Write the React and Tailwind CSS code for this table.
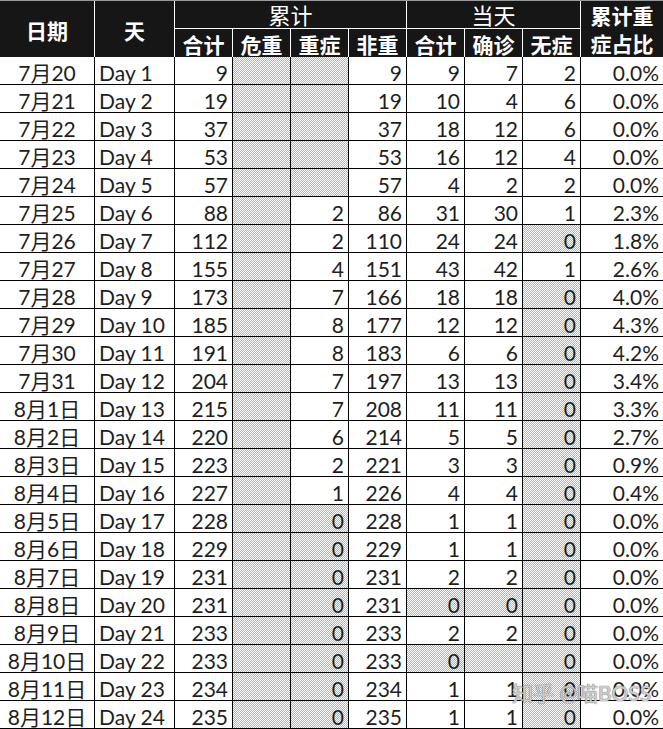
import React from "react";

const rows = [
  ["7月20", "Day 1", 9, null, null, 9, 9, 7, 2, "0.0%"],
  ["7月21", "Day 2", 19, null, null, 19, 10, 4, 6, "0.0%"],
  ["7月22", "Day 3", 37, null, null, 37, 18, 12, 6, "0.0%"],
  ["7月23", "Day 4", 53, null, null, 53, 16, 12, 4, "0.0%"],
  ["7月24", "Day 5", 57, null, null, 57, 4, 2, 2, "0.0%"],
  ["7月25", "Day 6", 88, null, 2, 86, 31, 30, 1, "2.3%"],
  ["7月26", "Day 7", 112, null, 2, 110, 24, 24, 0, "1.8%"],
  ["7月27", "Day 8", 155, null, 4, 151, 43, 42, 1, "2.6%"],
  ["7月28", "Day 9", 173, null, 7, 166, 18, 18, 0, "4.0%"],
  ["7月29", "Day 10", 185, null, 8, 177, 12, 12, 0, "4.3%"],
  ["7月30", "Day 11", 191, null, 8, 183, 6, 6, 0, "4.2%"],
  ["7月31", "Day 12", 204, null, 7, 197, 13, 13, 0, "3.4%"],
  ["8月1日", "Day 13", 215, null, 7, 208, 11, 11, 0, "3.3%"],
  ["8月2日", "Day 14", 220, null, 6, 214, 5, 5, 0, "2.7%"],
  ["8月3日", "Day 15", 223, null, 2, 221, 3, 3, 0, "0.9%"],
  ["8月4日", "Day 16", 227, null, 1, 226, 4, 4, 0, "0.4%"],
  ["8月5日", "Day 17", 228, null, 0, 228, 1, 1, 0, "0.0%"],
  ["8月6日", "Day 18", 229, null, 0, 229, 1, 1, 0, "0.0%"],
  ["8月7日", "Day 19", 231, null, 0, 231, 2, 2, 0, "0.0%"],
  ["8月8日", "Day 20", 231, null, 0, 231, 0, 0, 0, "0.0%"],
  ["8月9日", "Day 21", 233, null, 0, 233, 2, 2, 0, "0.0%"],
  ["8月10日", "Day 22", 233, null, 0, 233, 0, null, 0, "0.0%"],
  ["8月11日", "Day 23", 234, null, 0, 234, 1, 1, 0, "0.0%"],
  ["8月12日", "Day 24", 235, null, 0, 235, 1, 1, 0, "0.0%"],
];

const cols = "grid grid-cols-[95px_80px_58px_58px_58px_58px_58px_58px_58px_82px]";
const pattern =
  "bg-[repeating-conic-gradient(#b4b4b4_0_25%,#ffffff_0_50%)] bg-[length:2px_2px]";

function HeadCell({ children, className = "" }) {
  return (
    <div
      className={
        "flex items-center justify-center border-r border-white text-white font-bold text-[21px] leading-none " +
        className
      }
    >
      {children}
    </div>
  );
}

export default function App() {
  return (
    <div
      className="relative w-[663px] h-[729px] bg-white overflow-hidden text-[#1e1e1e]"
      style={{ fontFamily: 'Lato, "Noto Sans CJK SC", sans-serif' }}
    >
      <div className={cols + " grid-rows-[28px_28px] bg-[#161616] border-t border-[#9a9a9a]"}>
        <HeadCell className="row-span-2 pt-[2px]">日期</HeadCell>
        <HeadCell className="row-span-2 pt-[2px]">天</HeadCell>
        <HeadCell className="col-span-4 border-b font-normal text-[22px] pt-[3px]">累计</HeadCell>
        <HeadCell className="col-span-3 border-b font-normal text-[22px] pt-[3px]">当天</HeadCell>
        <HeadCell className="row-span-2 flex-col gap-[7px] border-r-0 pt-[1px]">
          <span>累计重</span>
          <span>症占比</span>
        </HeadCell>
        <HeadCell className="pt-[2px]">合计</HeadCell>
        <HeadCell className="pt-[2px]">危重</HeadCell>
        <HeadCell className="pt-[2px]">重症</HeadCell>
        <HeadCell className="pt-[2px]">非重</HeadCell>
        <HeadCell className="pt-[2px]">合计</HeadCell>
        <HeadCell className="pt-[2px]">确诊</HeadCell>
        <HeadCell className="pt-[2px]">无症</HeadCell>
      </div>
      {rows.map((r) => (
        <div key={r[0]} className={cols + " h-[28px] text-[21px] leading-none"}>
          <div className="flex items-end justify-center border-r border-b border-black pb-[1px]">
            {r[0]}
          </div>
          <div className="flex items-end justify-start border-r border-b border-black pl-[4px] pb-[1px]">
            {r[1]}
          </div>
          {r.slice(2, 9).map((v, i) => {
            const shaded = i === 1 || v === 0 || v === null;
            return (
              <div
                key={i}
                className={
                  "flex items-end justify-end border-r border-b border-black pr-[4px] pb-[1px] " +
                  (shaded ? pattern : "")
                }
              >
                {v === null ? "" : v}
              </div>
            );
          })}
          <div className="flex items-end justify-end border-b border-black pr-[4px] pb-[1px]">
            {r[9]}
          </div>
        </div>
      ))}
      <div className="pointer-events-none absolute left-[512px] top-[682px] text-[21px] leading-none text-white/70 [text-shadow:0_0_1px_#666,0_0_1px_#666]">
        知乎 @喵BOSS
      </div>
    </div>
  );
}
